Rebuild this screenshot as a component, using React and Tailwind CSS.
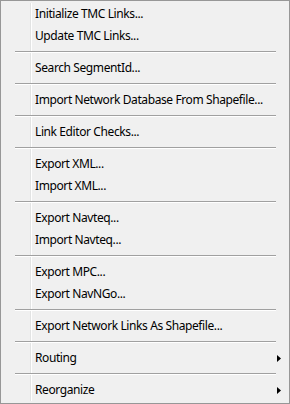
const groups = [
  ['Initialize TMC Links...', 'Update TMC Links...'],
  ['Search SegmentId...'],
  ['Import Network Database From Shapefile...'],
  ['Link Editor Checks...'],
  ['Export XML...', 'Import XML...'],
  ['Export Navteq...', 'Import Navteq...'],
  ['Export MPC...', 'Export NavNGo...'],
  ['Export Network Links As Shapefile...'],
  ['Routing>'],
  ['Reorganize>'],
]

export default function App() {
  return (
    <div className="w-[290px] h-[404px] border border-[#979797] bg-[#f0f0f0] p-[2px] font-['Noto_Sans',sans-serif] text-[12px] tracking-[-0.4px] text-black">
      <div className="h-full bg-[linear-gradient(to_right,transparent_27px,#e2e3e3_27px,#e2e3e3_28px,#ffffff_28px,#ffffff_29px,transparent_29px)]">
        {groups.map((items, gi) => (
          <div key={gi}>
            {gi > 0 && (
              <div className="h-[10px] pt-[4px] pl-[12px] pr-[11px]">
                <div className="border-t border-b border-t-[#a0a0a0] border-b-white" />
              </div>
            )}
            {items.map((label) => (
              <MenuItem key={label} label={label} />
            ))}
          </div>
        ))}
      </div>
    </div>
  )
}

function MenuItem({ label }) {
  const sub = label.endsWith('>')
  const text = sub ? label.slice(0, -1) : label
  return (
    <div className="h-[22px] flex items-center pl-[32px] pr-[6px] leading-none">
      <span className="flex-1 whitespace-nowrap">{text}</span>
      {sub && (
        <svg width="4" height="7" viewBox="0 0 4 7" className="block">
          <path d="M0 0 L4 3.5 L0 7 Z" fill="#000" />
        </svg>
      )}
    </div>
  )
}
